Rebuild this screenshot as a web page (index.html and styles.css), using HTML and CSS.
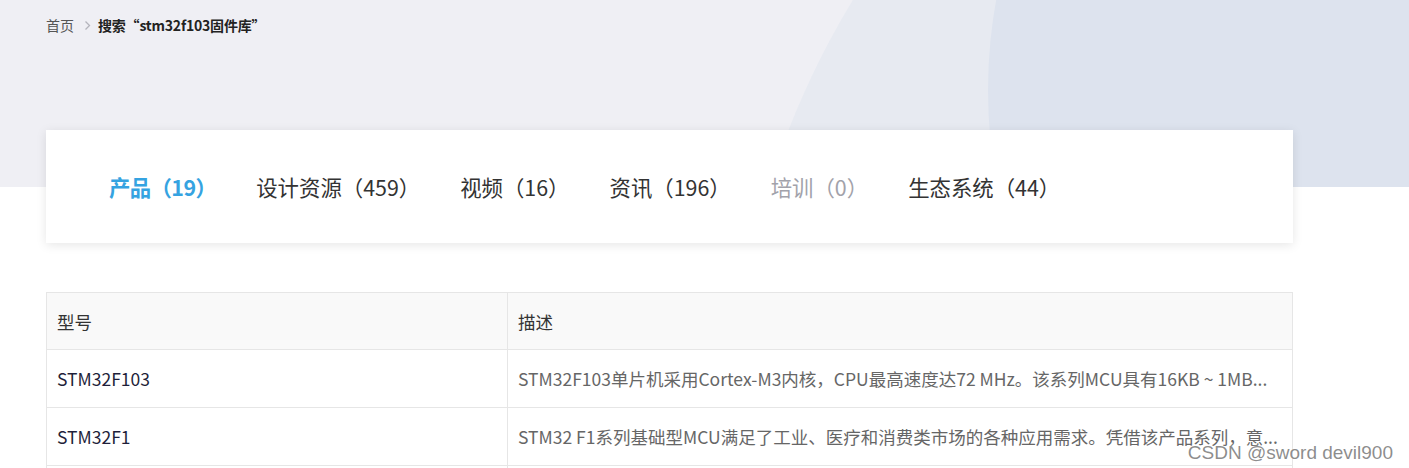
FILE: index.html
```html
<!DOCTYPE html>
<html lang="zh-CN">
  <head>
    <meta charset="UTF-8" />
    <meta name="viewport" content="width=device-width, initial-scale=1.0" />
    <title>搜索 - stm32f103固件库</title>
    <link rel="stylesheet" href="styles.css">
  </head>
  <body>
    <div class="hero">
      <div class="crumbs">
        <a href="#">首页</a>
        <svg class="crumb-sep" width="7" height="11" viewBox="0 0 7 11">
          <polyline points="1.5,1.5 5.5,5.5 1.5,9.5" fill="none" stroke="#b4b4bc" stroke-width="1.3" />
        </svg>
        <span class="current">搜索“stm32f103固件库”</span>
      </div>
    </div>

    <div class="main">
      <div class="tabs">
        <button class="active">产品（19）</button>
        <button>设计资源（459）</button>
        <button>视频（16）</button>
        <button>资讯（196）</button>
        <button class="disabled">培训（0）</button>
        <button>生态系统（44）</button>
      </div>

      <table class="results">
        <colgroup>
          <col class="col-model" />
          <col />
        </colgroup>
        <thead>
          <tr>
            <th>型号</th>
            <th>描述</th>
          </tr>
        </thead>
        <tbody>
          <tr>
            <td class="model">STM32F103</td>
            <td class="desc">STM32F103单片机采用Cortex-M3内核，CPU最高速度达72 MHz。该系列MCU具有16KB ~ 1MB...</td>
          </tr>
          <tr>
            <td class="model">STM32F1</td>
            <td class="desc">STM32 F1系列基础型MCU满足了工业、医疗和消费类市场的各种应用需求。凭借该产品系列，意...</td>
          </tr>
          <tr>
            <td class="model"></td>
            <td class="desc"></td>
          </tr>
        </tbody>
      </table>
    </div>

    <div class="watermark">CSDN @sword devil900</div>
  </body>
</html>
```

FILE: styles.css
```css
html,
body {
  overflow: hidden;
}
body {
  font-family: "Microsoft YaHei", "Noto Sans CJK SC", sans-serif;
  background-color: #fff;
  color: #333;
  margin: 0;
}
.hero {
  position: relative;
  height: 187px;
  background-color: #efeff4;
  overflow: hidden;
}
.hero::before,
.hero::after {
  content: "";
  position: absolute;
  border-radius: 50%;
}
.hero::before {
  left: 735px;
  top: -382px;
  width: 1600px;
  height: 1600px;
  background-color: #e7eaf1;
}
.hero::after {
  left: 988px;
  top: -410px;
  width: 1000px;
  height: 1000px;
  background-color: #dde3ee;
}
.crumbs {
  position: relative;
  z-index: 1;
  display: flex;
  align-items: center;
  padding: 15px 0 0 46px;
  font-size: 14px;
  line-height: 20px;
}
.crumbs a {
  color: #555;
  text-decoration: none;
}
.crumb-sep {
  margin: 0 7px 0 10px;
}
.crumbs .current {
  color: #222;
  font-weight: bold;
  letter-spacing: -0.2px;
}
.main {
  position: relative;
  width: 1247px;
  margin: -57px 0 0 46px;
}
.tabs {
  display: flex;
  align-items: center;
  gap: 40px;
  height: 113px;
  padding-left: 63px;
  background: white;
  box-shadow: 0 2px 10px rgba(0, 0, 0, 0.1);
}
.tabs button {
  background: none;
  border: none;
  padding: 0;
  font-family: inherit;
  font-size: 21.4px;
  color: #333;
  cursor: pointer;
}
.tabs button.active {
  color: #35a3e1;
  font-weight: bold;
  letter-spacing: -0.6px;
}
.tabs button.disabled {
  color: #a2a2aa;
  cursor: default;
}
.results {
  width: 100%;
  margin-top: 49px;
  border-collapse: collapse;
  table-layout: fixed;
  font-size: 17.5px;
}
.col-model {
  width: 461px;
}
.results th,
.results td {
  border: 1px solid #e6e6e6;
  padding: 0 10px;
  text-align: left;
  white-space: nowrap;
  overflow: hidden;
  text-overflow: ellipsis;
}
.results th {
  height: 56px;
  background-color: #f9f9f9;
  font-weight: normal;
  color: #333;
}
.results td {
  height: 57px;
}
.results .model {
  color: #1f1f3a;
}
.results .desc {
  color: #666;
}
.watermark {
  position: absolute;
  right: 16px;
  bottom: 4px;
  font-family: "Liberation Sans", Arial, sans-serif;
  font-size: 19px;
  color: rgba(120, 120, 120, 0.85);
  text-shadow: 0 0 2px #fff;
}
```
